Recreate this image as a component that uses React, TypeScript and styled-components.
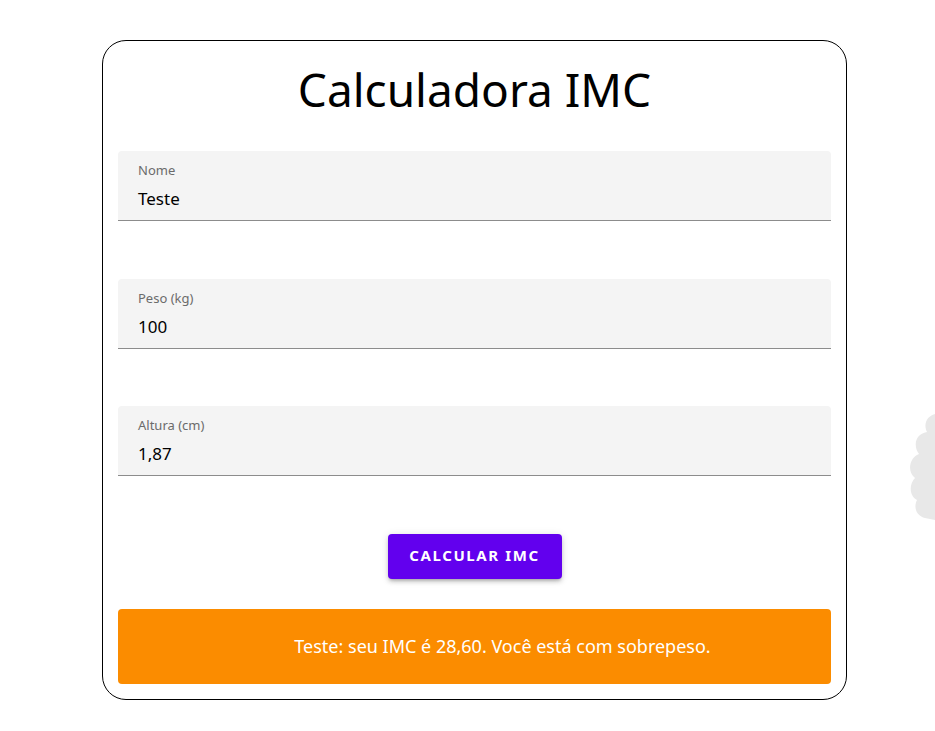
import React, { useState } from "react";
import styled, { createGlobalStyle } from "styled-components";

const GlobalStyle = createGlobalStyle`
  body {
    margin: 0;
    background: #fff;
    font-family: "Noto Sans", "Open Sans", sans-serif;
  }
`;

type Field = { label: string; value: string };

const initialFields: Field[] = [
  { label: "Nome", value: "Teste" },
  { label: "Peso (kg)", value: "100" },
  { label: "Altura (cm)", value: "1,87" },
];

const App = () => {
  const [fields] = useState(initialFields);

  return (
    <Page>
      <GlobalStyle />
      <Card>
        <Title>Calculadora IMC</Title>
        <Form>
          {fields.map((f) => (
            <FilledField key={f.label}>
              <Label>{f.label}</Label>
              <Value>{f.value}</Value>
            </FilledField>
          ))}
        </Form>
        <ButtonRow>
          <Button>Calcular IMC</Button>
        </ButtonRow>
        <Alert>Teste: seu IMC é 28,60. Você está com sobrepeso.</Alert>
      </Card>
      <Cloud width="30" height="110" viewBox="0 0 30 110">
        <path
          d="M30 2 C 22 4, 18 12, 22 20 C 10 22, 8 34, 14 42 C 4 46, 2 60, 10 66 C 4 72, 4 84, 12 88 C 8 96, 12 104, 20 106 L 30 108 Z"
          fill="#e8e8e8"
        />
      </Cloud>
    </Page>
  );
};

export default App;

const Page = styled.div`
  position: relative;
  min-height: 731px;
  padding: 40px 0 0 102px;
  box-sizing: border-box;
  overflow: hidden;
`;

const Card = styled.div`
  width: 745px;
  box-sizing: border-box;
  border: 1px solid #000;
  border-radius: 24px;
  padding: 12px 15px 15px;
  display: flex;
  flex-direction: column;
`;

const Title = styled.h1`
  margin: 0 0 26px;
  text-align: center;
  font-size: 46px;
  font-weight: 400;
  line-height: 72px;
  color: #000;
`;

const Form = styled.div`
  display: flex;
  flex-direction: column;
  gap: 57.5px;
`;

const FilledField = styled.div`
  height: 70px;
  box-sizing: border-box;
  background: #f4f4f4;
  border-radius: 4px 4px 0 0;
  border-bottom: 1px solid #8c8c8c;
  padding: 10px 20px 0;
  display: flex;
  flex-direction: column;
`;

const Label = styled.span`
  font-size: 13px;
  line-height: 18px;
  color: #6b6b6b;
`;

const Value = styled.span`
  margin-top: 9px;
  font-size: 17px;
  line-height: 22px;
  color: #000;
`;

const ButtonRow = styled.div`
  display: flex;
  justify-content: center;
  margin-top: 58px;
`;

const Button = styled.button`
  width: 174px;
  height: 45px;
  padding: 0 0 3px;
  border: none;
  border-radius: 4px;
  background: #6200ee;
  color: #fff;
  font-family: inherit;
  font-size: 15px;
  font-weight: 700;
  letter-spacing: 1.6px;
  text-transform: uppercase;
  box-shadow: 0 3px 3px -2px rgba(0, 0, 0, 0.2), 0 3px 4px 0 rgba(0, 0, 0, 0.14),
    0 1px 8px 0 rgba(0, 0, 0, 0.12);
  cursor: pointer;
`;

const Alert = styled.div`
  margin-top: 30px;
  height: 75px;
  padding: 0 0 2px 56px;
  box-sizing: border-box;
  border-radius: 4px;
  background: #fb8c00;
  color: #fff;
  font-size: 18px;
  display: flex;
  align-items: center;
  justify-content: center;
`;

const Cloud = styled.svg`
  position: absolute;
  right: 0;
  top: 412px;
`;
